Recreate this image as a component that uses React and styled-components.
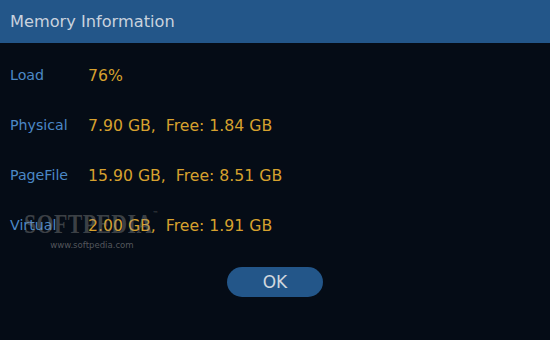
import React from "react";
import styled, { createGlobalStyle } from "styled-components";

const GlobalStyle = createGlobalStyle`
  html, body {
    margin: 0;
    padding: 0;
    background: #050c16;
  }
  body {
    font-family: "DejaVu Sans", Verdana, sans-serif;
  }
`;

const rows = [
  { label: "Load", value: "76%" },
  { label: "Physical", value: "7.90 GB,  Free: 1.84 GB" },
  { label: "PageFile", value: "15.90 GB,  Free: 8.51 GB" },
  { label: "Virtual", value: "2.00 GB,  Free: 1.91 GB" },
];

function App() {
  return (
    <Window>
      <GlobalStyle />
      <TitleBar>Memory Information</TitleBar>
      <Body>
        <List>
          {rows.map((r) => (
            <Row key={r.label}>
              <Label>{r.label}</Label>
              <Value>{r.value}</Value>
            </Row>
          ))}
        </List>
        <Footer>
          <OkButton>OK</OkButton>
        </Footer>
        <Watermark>
          <Brand>
            SOFTPEDIA<sup>™</sup>
          </Brand>
          <Url>www.softpedia.com</Url>
        </Watermark>
      </Body>
    </Window>
  );
}

const Window = styled.div`
  width: 550px;
  height: 340px;
  background: #050c16;
  display: flex;
  flex-direction: column;
  overflow: hidden;
`;

const TitleBar = styled.div`
  height: 43px;
  background: #235689;
  color: #c9d2de;
  font-size: 16.2px;
  display: flex;
  align-items: center;
  padding-left: 10px;
  box-sizing: border-box;
`;

const Body = styled.div`
  position: relative;
  flex: 1;
  padding-top: 7px;
`;

const List = styled.div`
  display: flex;
  flex-direction: column;
`;

const Row = styled.div`
  height: 50px;
  display: grid;
  grid-template-columns: 78px auto;
  align-items: center;
  padding-left: 10px;
`;

const Label = styled.span`
  color: #4b88c6;
  font-size: 14.2px;
`;

const Value = styled.span`
  color: #d6a12e;
  font-size: 15.7px;
  white-space: pre;
`;

const Footer = styled.div`
  display: flex;
  justify-content: center;
  margin-top: 17px;
`;

const OkButton = styled.button`
  width: 96px;
  height: 30px;
  border: none;
  border-radius: 15px;
  background: #235689;
  color: #d0d6de;
  font-family: "DejaVu Sans", Verdana, sans-serif;
  font-size: 17px;
  padding: 0;
  cursor: pointer;
`;

const Watermark = styled.div`
  position: absolute;
  left: 26px;
  top: 166px;
  width: 132px;
  pointer-events: none;
  display: flex;
  flex-direction: column;
  align-items: center;
`;

const Brand = styled.div`
  font-family: "Liberation Serif", "DejaVu Serif", serif;
  font-weight: bold;
  font-size: 28px;
  line-height: 30px;
  letter-spacing: 0.5px;
  color: rgba(140, 140, 140, 0.42);
  transform: scaleX(0.78);
  white-space: nowrap;

  sup {
    font-size: 8px;
    font-weight: normal;
    vertical-align: top;
    line-height: 12px;
    font-family: "DejaVu Sans", sans-serif;
  }
`;

const Url = styled.div`
  font-family: "DejaVu Sans Condensed", "DejaVu Sans", sans-serif;
  font-size: 9.5px;
  color: rgba(150, 150, 150, 0.55);
  margin-top: 0;
`;

export default App;
